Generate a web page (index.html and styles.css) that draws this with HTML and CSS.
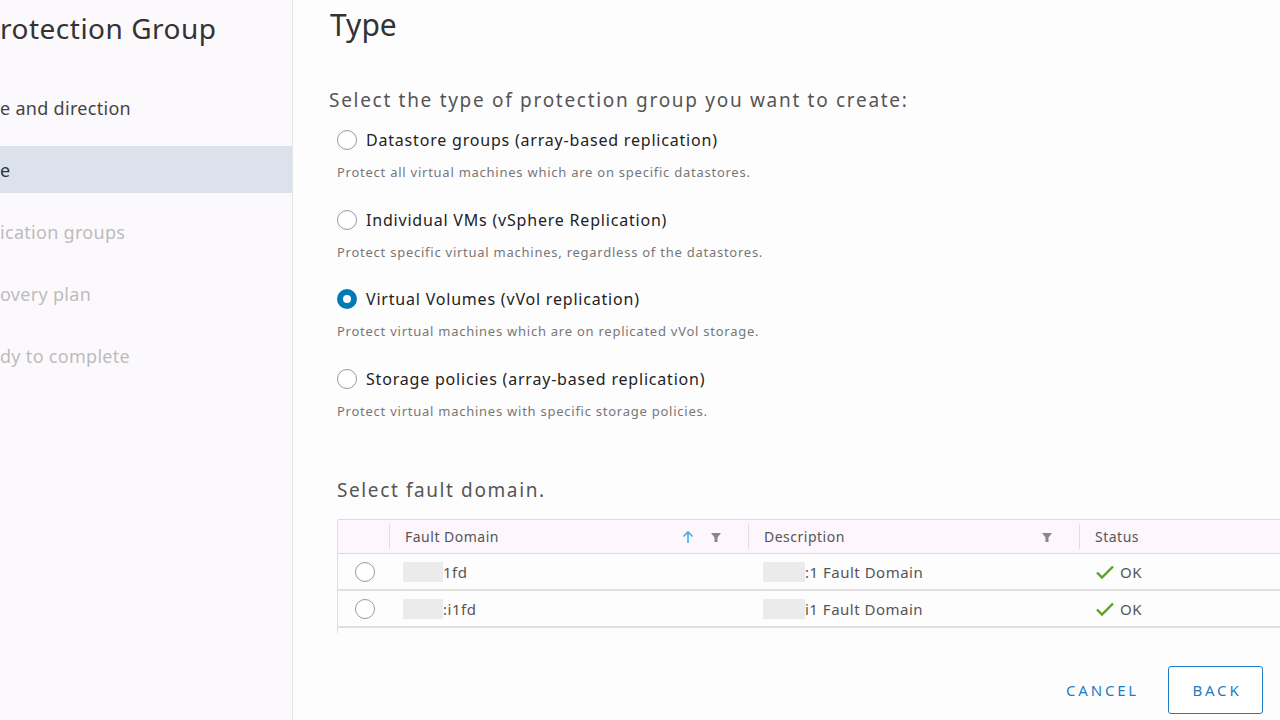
FILE: index.html
```html
<!DOCTYPE html>
<html>
<head>
<meta charset="utf-8">
<link rel="stylesheet" href="styles.css">
</head>
<body>
<div class="page">
  <aside class="sidebar">
    <h1 class="wiz-title">rotection Group</h1>
    <nav class="steps">
      <div class="step">e and direction</div>
      <div class="step active">e</div>
      <div class="step disabled">ication groups</div>
      <div class="step disabled">overy plan</div>
      <div class="step disabled">dy to complete</div>
    </nav>
  </aside>
  <main class="content">
    <h2 class="page-title">Type</h2>
    <p class="prompt">Select the type of protection group you want to create:</p>
    <div class="options">
      <div class="option">
        <div class="opt-row"><span class="radio"></span><span class="opt-label">Datastore groups (array-based replication)</span></div>
        <div class="opt-desc">Protect all virtual machines which are on specific datastores.</div>
      </div>
      <div class="option">
        <div class="opt-row"><span class="radio"></span><span class="opt-label">Individual VMs (vSphere Replication)</span></div>
        <div class="opt-desc">Protect specific virtual machines, regardless of the datastores.</div>
      </div>
      <div class="option">
        <div class="opt-row"><span class="radio checked"></span><span class="opt-label">Virtual Volumes (vVol replication)</span></div>
        <div class="opt-desc">Protect virtual machines which are on replicated vVol storage.</div>
      </div>
      <div class="option">
        <div class="opt-row"><span class="radio"></span><span class="opt-label">Storage policies (array-based replication)</span></div>
        <div class="opt-desc">Protect virtual machines with specific storage policies.</div>
      </div>
    </div>
    <p class="prompt fault">Select fault domain.</p>
    <div class="grid">
      <div class="grid-row head">
        <div class="cell c-sel"></div>
        <div class="cell c-fd"><span>Fault Domain</span>
          <span class="icons">
            <svg class="sort" width="12" height="14" viewBox="0 0 12 14"><path d="M6 13V2M1.5 6.5L6 2l4.5 4.5" fill="none" stroke="#49afd9" stroke-width="1.6"/></svg>
            <svg class="filter" width="12" height="12" viewBox="0 0 12 12"><path d="M1 2h10L7.5 6.5V11h-3V6.5z" fill="#888"/></svg>
          </span>
        </div>
        <div class="cell c-desc"><span>Description</span>
          <span class="icons"><svg class="filter" width="12" height="12" viewBox="0 0 12 12"><path d="M1 2h10L7.5 6.5V11h-3V6.5z" fill="#888"/></svg></span>
        </div>
        <div class="cell c-status"><span>Status</span></div>
      </div>
      <div class="grid-row">
        <div class="cell c-sel"><span class="radio"></span></div>
        <div class="cell c-fd"><span class="redact"></span><span>1fd</span></div>
        <div class="cell c-desc"><span class="redact"></span><span>:1 Fault Domain</span></div>
        <div class="cell c-status"><svg class="check" width="20" height="16" viewBox="0 0 20 16"><path d="M2 8.5l5 5L18 2.5" fill="none" stroke="#5aa220" stroke-width="2.4"/></svg><span>OK</span></div>
      </div>
      <div class="grid-row">
        <div class="cell c-sel"><span class="radio"></span></div>
        <div class="cell c-fd"><span class="redact"></span><span>:i1fd</span></div>
        <div class="cell c-desc"><span class="redact"></span><span>i1 Fault Domain</span></div>
        <div class="cell c-status"><svg class="check" width="20" height="16" viewBox="0 0 20 16"><path d="M2 8.5l5 5L18 2.5" fill="none" stroke="#5aa220" stroke-width="2.4"/></svg><span>OK</span></div>
      </div>
      <div class="grid-foot"></div>
    </div>
    <div class="actions">
      <button class="btn link">CANCEL</button>
      <button class="btn outline">BACK</button>
    </div>
  </main>
</div>
</body>
</html>
```
FILE: styles.css
```css
* { box-sizing: border-box; }
html, body { margin: 0; padding: 0; }
body {
  width: 1280px; height: 720px; overflow: hidden;
  font-family: "Noto Sans", "Liberation Sans", sans-serif;
  background: #fefdfe;
  color: #333;
}
.page { display: flex; height: 720px; }
.sidebar {
  width: 293px; flex: none;
  background: #fcf9fc;
  border-right: 1px solid #e6e4e8;
  height: 720px;
}
.wiz-title {
  margin: 0; padding: 10px 0 0 0;
  font-size: 28px; font-weight: 400; color: #333;
  line-height: 36px;
  letter-spacing: 0.5px;
}
.steps { margin-top: 31px; display: flex; flex-direction: column; }
.step {
  height: 62px; line-height: 62px;
  font-size: 18px; color: #444;
  letter-spacing: 0.3px;
}
.step.active {
  color: #333;
  background: linear-gradient(transparent 7px, #dbe2ec 7px, #dbe2ec 54px, transparent 54px);
}
.step.disabled { color: #bcbcbc; }

.content { flex: 1; min-width: 0; padding: 0 0 0 36px; }
.page-title {
  margin: 0; padding-top: 7px;
  font-size: 30px; font-weight: 400; color: #333; line-height: 36px;
  padding-left: 1px;
}
.prompt {
  margin: 41px 0 0 0;
  font-size: 19px; color: #555; line-height: 32px;
  letter-spacing: 1.7px;
}
.options { padding-left: 8px; margin-top: 12px; }
.option { height: 79.5px; }
.opt-row { display: flex; align-items: center; height: 24px; }
.radio {
  width: 20px; height: 20px; border-radius: 50%;
  border: 1.5px solid #9a9a9a; background: #fff;
  display: inline-block; flex: none;
}
.radio.checked { border: 6px solid #0079b8; background: #fff; }
.opt-label { margin-left: 9px; font-size: 16px; color: #222; letter-spacing: 0.8px; }
.opt-desc { margin-top: 11px; font-size: 13px; line-height: 18px; color: #777; letter-spacing: 0.75px; }

.prompt.fault { margin: 28px 0 0 8px; letter-spacing: 1.6px; }
.grid {
  margin: 13px 0 0 8px;
  border: 1px solid #dcdcdc; border-right: none; border-bottom: none;
  border-radius: 3px 0 0 0;
  width: 950px;
}
.grid-row { display: flex; height: 37px; border-bottom: 2px solid #e0e0e0; align-items: center; }
.grid-row:last-of-type { height: 38px; }
.grid-row.head { background: #fdf6fd; height: 34px; border-bottom: 1px solid #dcdcdc; }
.cell { display: flex; align-items: center; height: 100%; font-size: 15px; color: #555; letter-spacing: 0.5px; }
.head .cell { font-size: 14px; color: #555; position: relative; }
.head .cell + .cell::before {
  content: ""; position: absolute; left: 0; top: 4px; bottom: 4px; width: 1px; background: #dedede;
}
.c-sel { width: 51px; justify-content: center; }
.c-sel .radio { margin-left: 2px; }
.c-fd { width: 359px; padding-left: 16px; }
.c-desc { width: 331px; padding-left: 16px; }
.c-status { flex: 1; padding-left: 16px; }
.head .c-fd, .head .c-desc { justify-content: space-between; padding-right: 26px; }
.icons { display: flex; align-items: center; gap: 16px; }
.redact { display: inline-block; width: 40px; height: 20px; background: #ebebeb; }
.grid-row .c-fd .redact { margin-left: -2px; }
.grid-row .c-desc .redact { margin-left: -1px; width: 42px; }
.check { margin-right: 5px; }
.grid-foot { height: 5px; }

.actions { display: flex; justify-content: flex-end; align-items: center; gap: 29px; margin-top: 33px; padding-right: 17px; }
.btn {
  font-family: "Noto Sans", "Liberation Sans", sans-serif;
  font-size: 15px; letter-spacing: 2.8px; color: #1f7cc4; background: transparent;
  height: 48px; border-radius: 3px; cursor: pointer;
}
.btn.link { border: none; padding: 0; }
.btn.outline { border: 1.5px solid #1f7cc4; width: 95px; padding: 0 0 0 3px; background: #fff; }
```
